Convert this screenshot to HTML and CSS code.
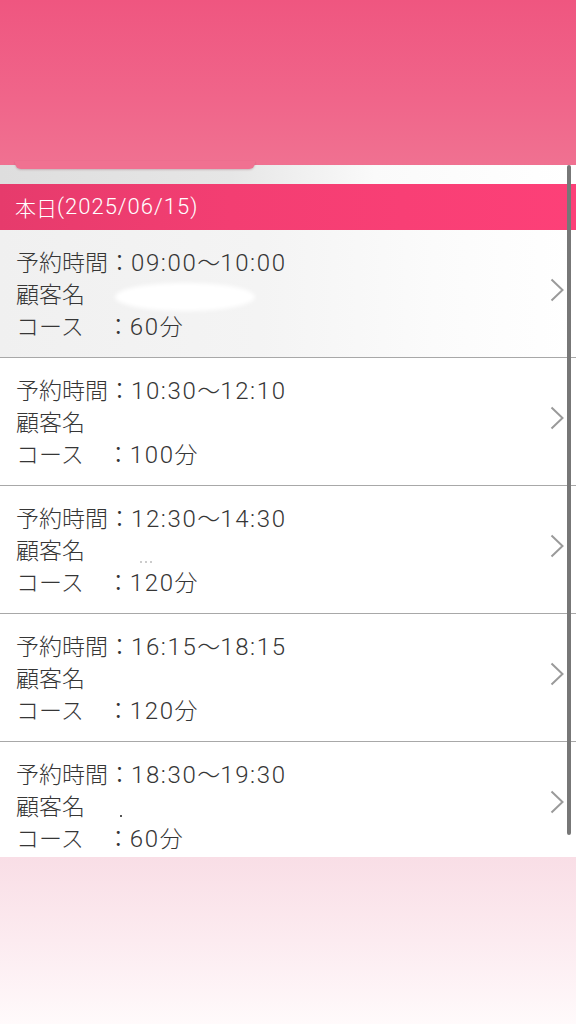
FILE: index.html
```html
<!DOCTYPE html>
<html lang="ja">
<head>
<meta charset="utf-8">
<title>予約一覧</title>
<link rel="stylesheet" href="styles.css">
</head>
<body>
<div class="page">
  <header class="header">
    <div class="tab"></div>
  </header>
  <div class="band"></div>
  <div class="datebar">本日<span class="d">(2025/06/15)</span></div>
  <div class="list">
    <div class="row first">
      <div class="info">
        <div class="line">予約時間：<span class="n">09:00</span>～<span class="n">10:00</span></div>
        <div class="line">顧客名<span class="blob"></span></div>
        <div class="line">コース　：<span class="n">60</span>分</div>
      </div>
      <svg class="chev" viewBox="0 0 16 24" width="16" height="24"><path d="M2.5 1.5 L13.5 12 L2.5 22.5" fill="none" stroke="#9a9a9a" stroke-width="2"/></svg>
    </div>
    <div class="row">
      <div class="info">
        <div class="line">予約時間：<span class="n">10:30</span>～<span class="n">12:10</span></div>
        <div class="line">顧客名</div>
        <div class="line">コース　：<span class="n">100</span>分</div>
      </div>
      <svg class="chev" viewBox="0 0 16 24" width="16" height="24"><path d="M2.5 1.5 L13.5 12 L2.5 22.5" fill="none" stroke="#9a9a9a" stroke-width="2"/></svg>
    </div>
    <div class="row">
      <div class="info">
        <div class="line">予約時間：<span class="n">12:30</span>～<span class="n">14:30</span></div>
        <div class="line">顧客名<span class="specks"></span></div>
        <div class="line">コース　：<span class="n">120</span>分</div>
      </div>
      <svg class="chev" viewBox="0 0 16 24" width="16" height="24"><path d="M2.5 1.5 L13.5 12 L2.5 22.5" fill="none" stroke="#9a9a9a" stroke-width="2"/></svg>
    </div>
    <div class="row">
      <div class="info">
        <div class="line">予約時間：<span class="n">16:15</span>～<span class="n">18:15</span></div>
        <div class="line">顧客名</div>
        <div class="line">コース　：<span class="n">120</span>分</div>
      </div>
      <svg class="chev" viewBox="0 0 16 24" width="16" height="24"><path d="M2.5 1.5 L13.5 12 L2.5 22.5" fill="none" stroke="#9a9a9a" stroke-width="2"/></svg>
    </div>
    <div class="row">
      <div class="info">
        <div class="line">予約時間：<span class="n">18:30</span>～<span class="n">19:30</span></div>
        <div class="line">顧客名<span class="dot"></span></div>
        <div class="line">コース　：<span class="n">60</span>分</div>
      </div>
      <svg class="chev" viewBox="0 0 16 24" width="16" height="24"><path d="M2.5 1.5 L13.5 12 L2.5 22.5" fill="none" stroke="#9a9a9a" stroke-width="2"/></svg>
    </div>
  </div>
  <div class="footer"></div>
  <div class="scrollbar"></div>
</div>
</body>
</html>
```
FILE: styles.css
```css
html, body {
  margin: 0;
  padding: 0;
  background: #ffffff;
}
body {
  font-family: "Noto Sans CJK JP", "Noto Sans", sans-serif;
  font-weight: 300;
  color: #363636;
}
.n {
  font-family: Roboto, "Noto Sans", sans-serif;
  font-weight: 300;
  font-size: 24px;
  line-height: 1;
  letter-spacing: 1.6px;
}
.d {
  font-family: Roboto, "Noto Sans", sans-serif;
  font-weight: 300;
  font-size: 22px;
  line-height: 1;
  letter-spacing: 1px;
}
.page {
  position: relative;
  width: 576px;
  height: 1024px;
  display: flex;
  flex-direction: column;
  overflow: hidden;
}
.header {
  position: relative;
  height: 165px;
  flex: none;
  background: linear-gradient(to bottom, #ef5680 0%, #f0658a 60%, #f07191 100%);
}
.tab {
  position: absolute;
  left: 15px;
  width: 240px;
  bottom: -4px;
  height: 8px;
  background: #f07191;
  border-radius: 0 0 6px 6px;
  box-shadow: 0 1px 2px rgba(120, 40, 60, 0.25);
}
.band {
  height: 19px;
  flex: none;
  background: linear-gradient(to right, #dedede 0%, #e6e6e6 40%, #fafafa 65%, #ffffff 100%);
}
.datebar {
  height: 46px;
  flex: none;
  box-sizing: border-box;
  padding-left: 15px;
  display: flex;
  align-items: center;
  color: #ffffff;
  font-size: 21px;
  background: linear-gradient(to right, #e63b6c 0%, #f33e72 40%, #fd4078 100%);
}
.list {
  height: 627px;
  flex: none;
  overflow: hidden;
}
.row {
  display: flex;
  align-items: center;
  justify-content: space-between;
  box-sizing: border-box;
  height: 128px;
  padding: 14px 11px 15px 16px;
  border-bottom: 1px solid #a8a8a8;
  background: #ffffff;
}
.row.first {
  background: linear-gradient(to right, #f0f0f0 0%, #f4f4f4 45%, #fbfbfb 75%, #ffffff 100%);
}
.info {
  display: flex;
  flex-direction: column;
}
.line {
  font-size: 23px;
  line-height: 32px;
  height: 32px;
  white-space: nowrap;
}
.blob {
  display: inline-block;
  width: 140px;
  height: 28px;
  margin-left: 30px;
  vertical-align: middle;
  border-radius: 50%;
  background: #ffffff;
  filter: blur(2px);
}
.dot {
  display: inline-block;
  width: 2px;
  height: 2px;
  margin-left: 35px;
  vertical-align: -2px;
  background: #555555;
}
.specks {
  display: inline-block;
  width: 14px;
  height: 2px;
  margin-left: 55px;
  vertical-align: -4px;
  background: repeating-linear-gradient(to right, #cccccc 0 2px, transparent 2px 5px);
}
.chev {
  flex: none;
  margin-top: -6px;
}
.footer {
  flex: 1;
  background: linear-gradient(to bottom, #f9dee6 0%, #fcebf0 50%, #fffafb 100%);
}
.scrollbar {
  position: absolute;
  left: 567px;
  top: 165px;
  width: 4px;
  height: 670px;
  background: #777777;
  border-radius: 2px;
}
```
